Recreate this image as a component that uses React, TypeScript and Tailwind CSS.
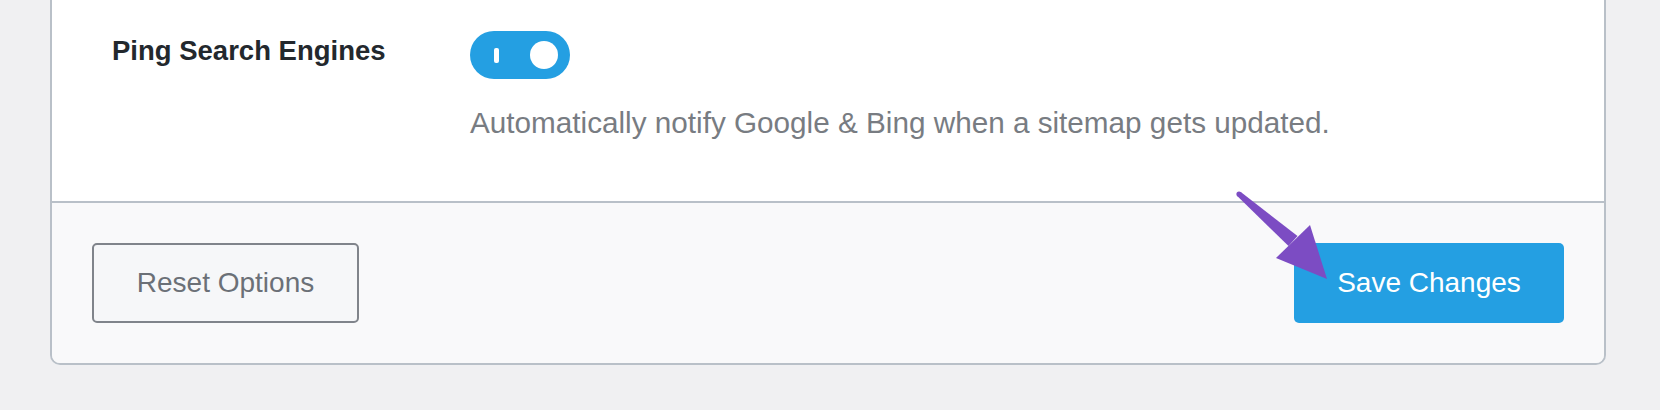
import React from 'react'

function Toggle() {
  return (
    <div className="relative h-[48px] w-[100px] rounded-full bg-[#249fe2]">
      <span className="absolute left-[24px] top-[17px] h-[15px] w-[5px] rounded-[2px] bg-white" />
      <span className="absolute right-[12px] top-[10px] h-[28px] w-[28px] rounded-full bg-white" />
    </div>
  )
}

// annotation arrow pointing at the save button
function Arrow() {
  return (
    <svg
      className="pointer-events-none absolute left-[1230px] top-[185px]"
      width="110"
      height="100"
      viewBox="0 0 110 100"
    >
      <circle cx="9" cy="9" r="2.6" fill="#7c4cc3" />
      <polygon points="7.2,10.9 10.8,7.1 67.5,51 58.5,61" fill="#7c4cc3" />
      <polygon points="46,73 80,40 97,94" fill="#7c4cc3" />
    </svg>
  )
}

export default function App() {
  return (
    <div className="relative h-[410px] w-full bg-[#f0f0f2] font-['Liberation_Sans',Arial,sans-serif]">
      <div className="ml-[50px] w-[1556px] overflow-hidden rounded-b-[10px] border-x-2 border-b-2 border-[#b9c0c8]">
        {/* setting row */}
        <div className="flex h-[201px] bg-white pl-[60px] pt-[31px]">
          <div className="w-[358px] text-[27.5px] font-bold leading-[40px] text-[#23282d]">
            Ping Search Engines
          </div>
          <div>
            <Toggle />
            <p className="mt-[24px] text-[29.7px] leading-[40px] text-[#787c82]">
              Automatically notify Google &amp; Bing when a sitemap gets updated.
            </p>
          </div>
        </div>

        {/* footer */}
        <div className="flex items-center justify-between border-t-2 border-[#b9c0c8] bg-[#f9f9fa] p-[40px]">
          <button className="h-[80px] w-[267px] rounded-[5px] border-2 border-[#80848b] bg-[#f6f7f9] text-[28px] text-[#6b7077]">
            Reset Options
          </button>
          <button className="h-[80px] w-[270px] rounded-[5px] bg-[#249fe2] text-[28px] text-white">
            Save Changes
          </button>
        </div>
      </div>
      <Arrow />
    </div>
  )
}
